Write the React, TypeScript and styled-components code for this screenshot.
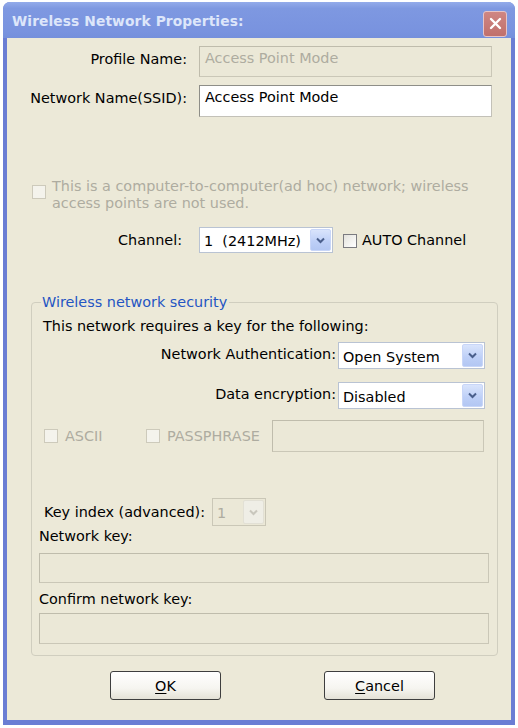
import React from 'react';
import styled, { createGlobalStyle } from 'styled-components';

const GlobalStyle = createGlobalStyle`
  html, body {
    margin: 0;
    padding: 0;
    background: #ffffff;
  }
  body {
    font-family: 'DejaVu Sans', 'Liberation Sans', sans-serif;
    font-size: 14.4px;
    color: #000;
  }
`;

const DISABLED = '#aeaca0';

const Window = styled.div`
  margin: 2px 0 0 3px;
  width: 512px;
  height: 723px;
  box-sizing: border-box;
  display: flex;
  flex-direction: column;
  background: #6a7dd4;
  border-radius: 7px 7px 0 0;
  padding: 0 4px 5px 4px;
`;

const TitleBar = styled.div`
  height: 36px;
  margin: 0 -4px;
  padding: 0 8px 0 9px;
  display: flex;
  align-items: center;
  justify-content: space-between;
  border-radius: 7px 7px 0 0;
  background: linear-gradient(#93abea 0%, #7e98e1 18%, #7993df 80%, #7590dc 100%);
`;

const Title = styled.div`
  color: #dde6fa;
  font-weight: bold;
  font-size: 13.8px;
  letter-spacing: 0.1px;
  padding-top: 1px;
`;

const CloseButton = styled.div`
  width: 24px;
  height: 26px;
  margin-top: 7px;
  box-sizing: border-box;
  border: 1px solid #e6c4c6;
  border-radius: 3px;
  background: linear-gradient(#cf8683, #c0706c);
  display: flex;
  align-items: center;
  justify-content: center;
`;

const Body = styled.div`
  flex: 1;
  background: #ece9d8;
  display: flex;
  flex-direction: column;
  padding-top: 8px;
`;

const FormRow = styled.div<{ $h: number; $mt: number }>`
  display: grid;
  grid-template-columns: 180px 293px;
  column-gap: 12px;
  align-items: center;
  height: ${(p) => p.$h}px;
  margin-top: ${(p) => p.$mt}px;
`;

const RightLabel = styled.div<{ $pt?: number }>`
  text-align: right;
  white-space: nowrap;
  align-self: start;
  padding-top: ${(p) => p.$pt ?? 5}px;
`;

const TextBox = styled.div<{ $disabled?: boolean; $w?: number }>`
  box-sizing: border-box;
  height: 100%;
  width: ${(p) => (p.$w ? `${p.$w}px` : 'auto')};
  padding: 3px 5px;
  line-height: 17px;
  white-space: nowrap;
  color: ${(p) => (p.$disabled ? DISABLED : '#000')};
  background: ${(p) => (p.$disabled ? '#ebe8d7' : '#ffffff')};
  border: 1px solid ${(p) => (p.$disabled ? '#cac7b7' : '#c3c1b8')};
  border-top-color: ${(p) => (p.$disabled ? '#bfbcac' : '#8e8e88')};
  border-left-color: ${(p) => (p.$disabled ? '#bfbcac' : '#8e8e88')};
`;

const AdHocRow = styled.div`
  display: flex;
  align-items: flex-start;
  margin-top: 61px;
  padding-left: 25px;
  color: ${DISABLED};
  line-height: 17px;
`;

const Check = styled.div<{ $disabled?: boolean }>`
  width: 14px;
  height: 14px;
  flex: none;
  box-sizing: border-box;
  border: 1px solid ${(p) => (p.$disabled ? '#cdcabb' : '#7b7b80')};
  background: ${(p) => (p.$disabled ? '#f4f3ec' : 'linear-gradient(135deg, #e3e2dc, #ffffff)')};
`;

const AdHocCheck = styled(Check)`
  margin-top: 7px;
  margin-right: 6px;
`;

const AdHocText = styled.div`
  width: 440px;
`;

const ChannelRow = styled.div`
  display: flex;
  align-items: center;
  height: 26px;
  margin-top: 15px;
`;

const ChannelLabel = styled.div`
  width: 175px;
  text-align: right;
  margin-right: 17px;
`;

const SelectBox = styled.div<{ $w: number; $disabled?: boolean }>`
  box-sizing: border-box;
  width: ${(p) => p.$w}px;
  height: 100%;
  display: flex;
  align-items: stretch;
  background: ${(p) => (p.$disabled ? '#ebe8d7' : '#ffffff')};
  border: 1px solid ${(p) => (p.$disabled ? '#cac7b7' : '#b9c3d3')};
  color: ${(p) => (p.$disabled ? DISABLED : '#000')};
`;

const SelectValue = styled.div`
  flex: 1;
  display: flex;
  align-items: center;
  padding-left: 4px;
  padding-top: 2px;
  white-space: pre;
`;

const ArrowButton = styled.div<{ $disabled?: boolean }>`
  width: 19px;
  flex: none;
  margin: 1px;
  border-radius: 2px;
  display: flex;
  align-items: center;
  justify-content: center;
  background: ${(p) =>
    p.$disabled ? '#efeee6' : 'linear-gradient(#d9e4fc, #bdcff7 60%, #b3c7f3)'};
  border: 1px solid ${(p) => (p.$disabled ? '#e2e0d5' : '#c8d6f8')};
`;

const AutoCheck = styled(Check)`
  margin-left: 10px;
  margin-right: 5px;
  margin-top: 2px;
`;

const Group = styled.fieldset`
  margin: 41px 13px 0 24px;
  padding: 0 0 11px 0;
  border: 1px solid #d0cebf;
  border-radius: 4px;
  min-width: 0;
`;

const Legend = styled.legend`
  color: #2455c3;
  padding: 0 2px 0 1px;
  margin-left: 9px;
  line-height: 17px;
`;

const GroupIntro = styled.div`
  margin-top: 7px;
  padding-left: 11px;
  line-height: 17px;
`;

const GroupRow = styled.div<{ $mt: number; $h: number }>`
  display: grid;
  grid-template-columns: 304px 147px;
  column-gap: 2px;
  align-items: center;
  height: ${(p) => p.$h}px;
  margin-top: ${(p) => p.$mt}px;
`;

const KeyModeRow = styled.div`
  display: flex;
  align-items: center;
  height: 32px;
  margin-top: 11px;
  padding-left: 12px;
  color: ${DISABLED};
`;

const CheckItem = styled.div<{ $w: number }>`
  width: ${(p) => p.$w}px;
  display: flex;
  align-items: center;
  gap: 7px;
`;

const KeyIndexRow = styled.div`
  display: flex;
  align-items: center;
  height: 28px;
  margin-top: 46px;
  padding-left: 12px;
`;

const KeyIndexLabel = styled.div`
  width: 168px;
`;

const FieldLabel = styled.div<{ $mt: number }>`
  margin-top: ${(p) => p.$mt}px;
  padding-left: 7px;
  line-height: 17px;
`;

const WideBox = styled.div<{ $mt: number; $h: number }>`
  margin: ${(p) => p.$mt}px 0 0 7px;
  height: ${(p) => p.$h}px;
  width: 450px;
`;

const ButtonRow = styled.div`
  display: flex;
  gap: 103px;
  padding-left: 103px;
  margin-top: 15px;
`;

const Button = styled.button`
  width: 111px;
  height: 29px;
  box-sizing: border-box;
  font-family: inherit;
  font-size: 14.4px;
  color: #000;
  border: 1px solid #3e3e3e;
  border-radius: 3px;
  background: linear-gradient(#ffffff 0%, #f6f5f0 60%, #e4e1d6 100%);
  padding: 0;
  u {
    text-decoration: underline;
    text-underline-offset: 2px;
  }
`;

const Chevron = ({ color }: { color: string }) => (
  <svg width="9" height="7" viewBox="0 0 9 7">
    <path d="M1 1.5 L4.5 5 L8 1.5" fill="none" stroke={color} strokeWidth="2" />
  </svg>
);

const CloseIcon = () => (
  <svg width="13" height="13" viewBox="0 0 13 13">
    <path d="M2 2 L11 11 M11 2 L2 11" stroke="#ffffff" strokeWidth="2.4" strokeLinecap="round" />
  </svg>
);

const Select = ({ value, w, disabled }: { value: string; w: number; disabled?: boolean }) => (
  <SelectBox $w={w} $disabled={disabled}>
    <SelectValue>{value}</SelectValue>
    <ArrowButton $disabled={disabled}>
      <Chevron color={disabled ? '#c9c7bd' : '#4a5f8c'} />
    </ArrowButton>
  </SelectBox>
);

export default function App() {
  return (
    <>
      <GlobalStyle />
      <Window>
        <TitleBar>
          <Title>Wireless Network Properties:</Title>
          <CloseButton>
            <CloseIcon />
          </CloseButton>
        </TitleBar>
        <Body>
          <FormRow $h={31} $mt={0}>
            <RightLabel>Profile Name:</RightLabel>
            <TextBox $disabled>Access Point Mode</TextBox>
          </FormRow>
          <FormRow $h={32} $mt={8}>
            <RightLabel>Network Name(SSID):</RightLabel>
            <TextBox>Access Point Mode</TextBox>
          </FormRow>

          <AdHocRow>
            <AdHocCheck $disabled />
            <AdHocText>
              This is a computer-to-computer(ad hoc) network; wireless access points are not used.
            </AdHocText>
          </AdHocRow>

          <ChannelRow>
            <ChannelLabel>Channel:</ChannelLabel>
            <Select value="1  (2412MHz)" w={134} />
            <AutoCheck />
            <span>AUTO Channel</span>
          </ChannelRow>

          <Group>
            <Legend>Wireless network security</Legend>
            <GroupIntro>This network requires a key for the following:</GroupIntro>
            <GroupRow $mt={7} $h={27}>
              <RightLabel $pt={4}>Network Authentication:</RightLabel>
              <Select value="Open System" w={147} />
            </GroupRow>
            <GroupRow $mt={13} $h={27}>
              <RightLabel $pt={4}>Data encryption:</RightLabel>
              <Select value="Disabled" w={147} />
            </GroupRow>
            <KeyModeRow>
              <CheckItem $w={102}>
                <Check $disabled />
                ASCII
              </CheckItem>
              <CheckItem $w={126}>
                <Check $disabled />
                PASSPHRASE
              </CheckItem>
              <TextBox $disabled $w={212} />
            </KeyModeRow>
            <KeyIndexRow>
              <KeyIndexLabel>Key index (advanced):</KeyIndexLabel>
              <Select value="1" w={54} disabled />
            </KeyIndexRow>
            <FieldLabel $mt={2}>Network key:</FieldLabel>
            <WideBox $mt={8} $h={30}>
              <TextBox $disabled />
            </WideBox>
            <FieldLabel $mt={8}>Confirm network key:</FieldLabel>
            <WideBox $mt={5} $h={31}>
              <TextBox $disabled />
            </WideBox>
          </Group>

          <ButtonRow>
            <Button>
              <u>O</u>K
            </Button>
            <Button>
              <u>C</u>ancel
            </Button>
          </ButtonRow>
        </Body>
      </Window>
    </>
  );
}
